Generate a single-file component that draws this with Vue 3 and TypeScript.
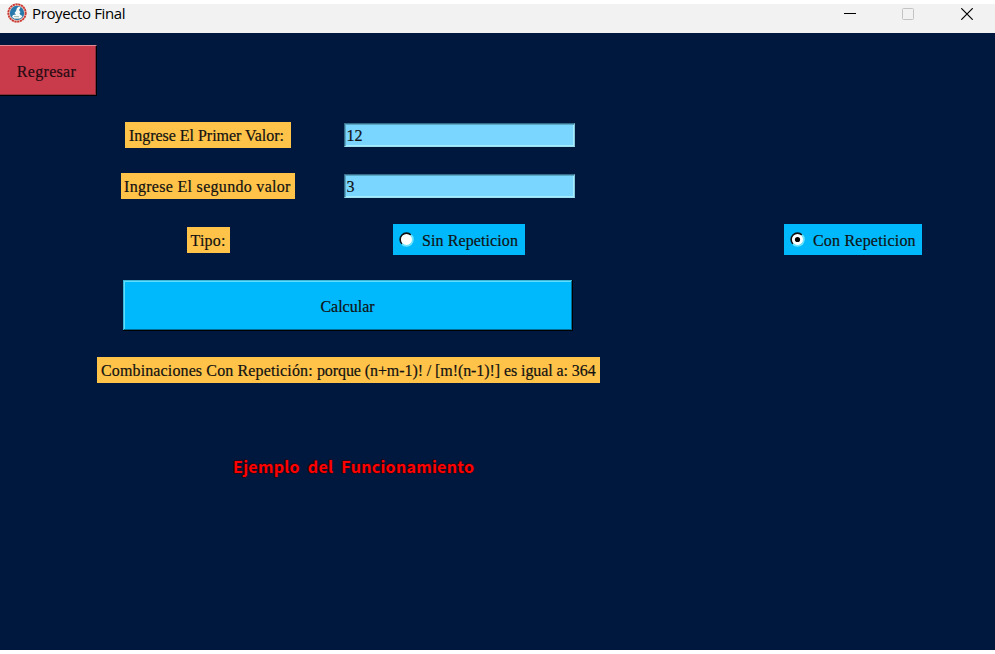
<script setup lang="ts">
import { ref } from 'vue'

type Mode = 'sin' | 'con'

const first = ref('12')
const second = ref('3')
const mode = ref<Mode>('con')
const resultName = ref('Combinaciones Con Repetición: ')
const resultDetail = ref('porque (n+m-1)! / [m!(n-1)!] es igual a: 364')
</script>

<template>
  <div class="window">
    <header class="titlebar">
      <svg class="logo" width="20" height="20" viewBox="0 0 20 20">
        <circle cx="10" cy="10" r="9.7" fill="#f0cfc5" />
        <circle cx="10" cy="10" r="8.700" fill="none" stroke="#c93a35" stroke-width="1.800" stroke-dasharray="2.200 .6" />
        <circle cx="10" cy="10" r="7.200" fill="#2878ab" />
        <path d="M10 5l2-1.500 1.500 1L12 7l1.500 2-1 1.500 1 1.500 2 1-1.500 2-3 1H8l-3-2 1-2 3-.5L7.500 10 9 8z" fill="#f5f8f8" />
        <path d="M7 13.500h5M8 15.300h4" stroke="#8ca79c" stroke-width=".7" />
      </svg>
      <span class="title">Proyecto Final</span>
      <div class="controls">
        <svg width="12" height="12" viewBox="0 0 12 12"><path d="M0 5.500h12" stroke="#000" /></svg>
        <svg width="12" height="12" viewBox="0 0 12 12"><rect x=".5" y=".5" width="11" height="11" rx="1" fill="none" stroke="#c3c3c3" /></svg>
        <svg class="close" width="12" height="12" viewBox="0 0 12 12"><path d="M.3.3l11.400 11.400M11.700.3L.3 11.700" stroke="#000" stroke-width="1.200" /></svg>
      </div>
    </header>
    <main class="content">
      <button class="back"><span>Regresar</span></button>
      <div class="row row-first">
        <div class="cell-label"><label class="tag first-tag" for="v1">Ingrese El Primer Valor:</label></div>
        <div class="cell"><input id="v1" v-model="first" class="entry" /></div>
      </div>
      <div class="row row-second">
        <div class="cell-label"><label class="tag second-tag" for="v2">Ingrese El segundo valor</label></div>
        <div class="cell"><input id="v2" v-model="second" class="entry" /></div>
      </div>
      <div class="row row-type">
        <div class="cell-label"><span class="tag type-tag">Tipo:</span></div>
        <div class="cell">
          <div class="radio sin" @click="mode = 'sin'">
            <svg width="15" height="15" viewBox="0 0 15 15">
              <circle cx="7.500" cy="7.500" r="6" fill="#fff" />
              <path d="M3 12A6.300 6.300 0 0 1 12 3" fill="none" stroke="#111" stroke-width="1.600" />
              <path d="M12 3A6.300 6.300 0 0 1 3 12" fill="none" stroke="#6fe4ff" stroke-width="1.800" />
              <circle v-if="mode === 'sin'" cx="7.500" cy="7.500" r="2.600" />
            </svg>
            <span>Sin Repeticion</span>
          </div>
        </div>
        <div class="radio con" @click="mode = 'con'">
          <svg width="15" height="15" viewBox="0 0 15 15">
            <circle cx="7.500" cy="7.500" r="6" fill="#fff" />
            <path d="M3 12A6.300 6.300 0 0 1 12 3" fill="none" stroke="#111" stroke-width="1.600" />
            <path d="M12 3A6.300 6.300 0 0 1 3 12" fill="none" stroke="#6fe4ff" stroke-width="1.800" />
            <circle v-if="mode === 'con'" cx="7.500" cy="7.500" r="2.600" />
          </svg>
          <span>Con Repeticion</span>
        </div>
      </div>
      <button class="calc"><span>Calcular</span></button>
      <div class="tag result"><span class="result-name">{{ resultName }}</span><span class="result-detail">{{ resultDetail }}</span></div>
      <div class="example">Ejemplo del Funcionamiento</div>
    </main>
  </div>
</template>

<style>
body {
  background: #fff;
}
</style>

<style scoped>
* {
  box-sizing: border-box;
}
.window {
  width: 995px;
  height: 654px;
  padding: 4px 0;
  overflow: hidden;
  display: flex;
  flex-direction: column;
  background: #fff;
}
.titlebar {
  height: 29px;
  flex: none;
  display: flex;
  align-items: flex-start;
  background: #f2f2f2;
  padding-left: 7px;
}
.logo {
  flex: none;
  margin-top: -1px;
}
.title {
  margin-left: 5px;
  font: 15px/18px "Open Sans", "Noto Sans", sans-serif;
  letter-spacing: -0.38px;
  color: #000;
  white-space: nowrap;
}
.controls {
  margin-left: auto;
  margin-right: 22px;
  margin-top: 4px;
  display: flex;
  gap: 46px;
}
.close {
  margin-left: 1px;
}
.content {
  flex: 1;
  display: flex;
  flex-direction: column;
  align-items: flex-start;
  padding-top: 12px;
  background: #00183d;
  font: 16px/18px "Liberation Serif", serif;
  color: #111;
  -webkit-text-stroke: 0.2px currentColor;
  white-space: nowrap;
}
button,
input {
  font: inherit;
  color: inherit;
  letter-spacing: inherit;
  border-radius: 0;
  outline: none;
}
.back {
  width: 97px;
  height: 51px;
  padding: 2px 3px 0 0;
  text-align: center;
  background: #c93b4a;
  border: 0;
  border-top: 1px solid #e58a94;
  border-right: 1px solid #000;
  border-bottom: 1px solid #000;
  box-shadow: inset -1px -1px 0 #87303d;
  color: #260a12;
  letter-spacing: 0.3px;
}
.row {
  display: flex;
  align-items: center;
  width: 995px;
  padding-left: 97px;
}
.row-first {
  height: 26px;
  margin-top: 26px;
}
.row-second {
  height: 26px;
  margin-top: 25px;
}
.row-type {
  height: 31px;
  margin-top: 25px;
}
.cell-label {
  width: 222px;
  display: flex;
  justify-content: center;
}
.cell {
  width: 280px;
  display: flex;
  justify-content: center;
}
.tag {
  height: 26px;
  padding: 5px 4px 0;
  background: #ffc34a;
}
.first-tag {
  width: 166px;
  letter-spacing: -0.03px;
}
.second-tag {
  width: 174px;
  padding-left: 3px;
  letter-spacing: 0.3px;
}
.type-tag {
  width: 43px;
  letter-spacing: 0.2px;
}
.entry {
  width: 231px;
  height: 24px;
  padding: 1px 1px 0 2px;
  background: #7ad5ff;
  border: 1px solid;
  border-color: #356c88 #86c5d8 #9be0ec #356c88;
  box-shadow: inset 1px 1px 0 #5ba6c4, inset -1px -1px 0 #a4ecff;
}
.radio {
  display: flex;
  align-items: center;
  height: 31px;
  padding-left: 6px;
  background: #00b9fd;
}
.radio svg {
  margin-top: -1px;
}
.radio span {
  margin-left: 8px;
  padding-top: 2px;
  letter-spacing: 0.1px;
}
.sin {
  width: 132px;
}
.con {
  width: 138px;
  margin-left: 185px;
}
.con span {
  letter-spacing: 0.2px;
}
.calc {
  width: 450px;
  height: 51px;
  margin: 25px 0 0 123px;
  padding: 3px 0 0;
  background: #00b9fd;
  border: 0;
  border-right: 1px solid #000;
  border-bottom: 1px solid #000;
  box-shadow: inset 1px 1px 0 #3cb4d4, inset -1px -1px 0 #006f98, inset 2px 2px 0 #5fdcff;
}
.result {
  width: 503px;
  margin: 26px 0 0 97px;
  white-space: pre;
}
.result-name {
  letter-spacing: 0.13px;
}
.result-detail {
  letter-spacing: -0.08px;
}
.example {
  margin: 71px 0 0 233px;
  font: bold 16px/24px "Noto Sans CJK SC", sans-serif;
  letter-spacing: 0.3px;
  word-spacing: 4px;
  color: #f00;
  -webkit-text-stroke: 0;
  text-shadow: 1px 0 #200818, -1px 0 #200818, 0 1px #200818, 0 -1px #200818;
}
</style>
